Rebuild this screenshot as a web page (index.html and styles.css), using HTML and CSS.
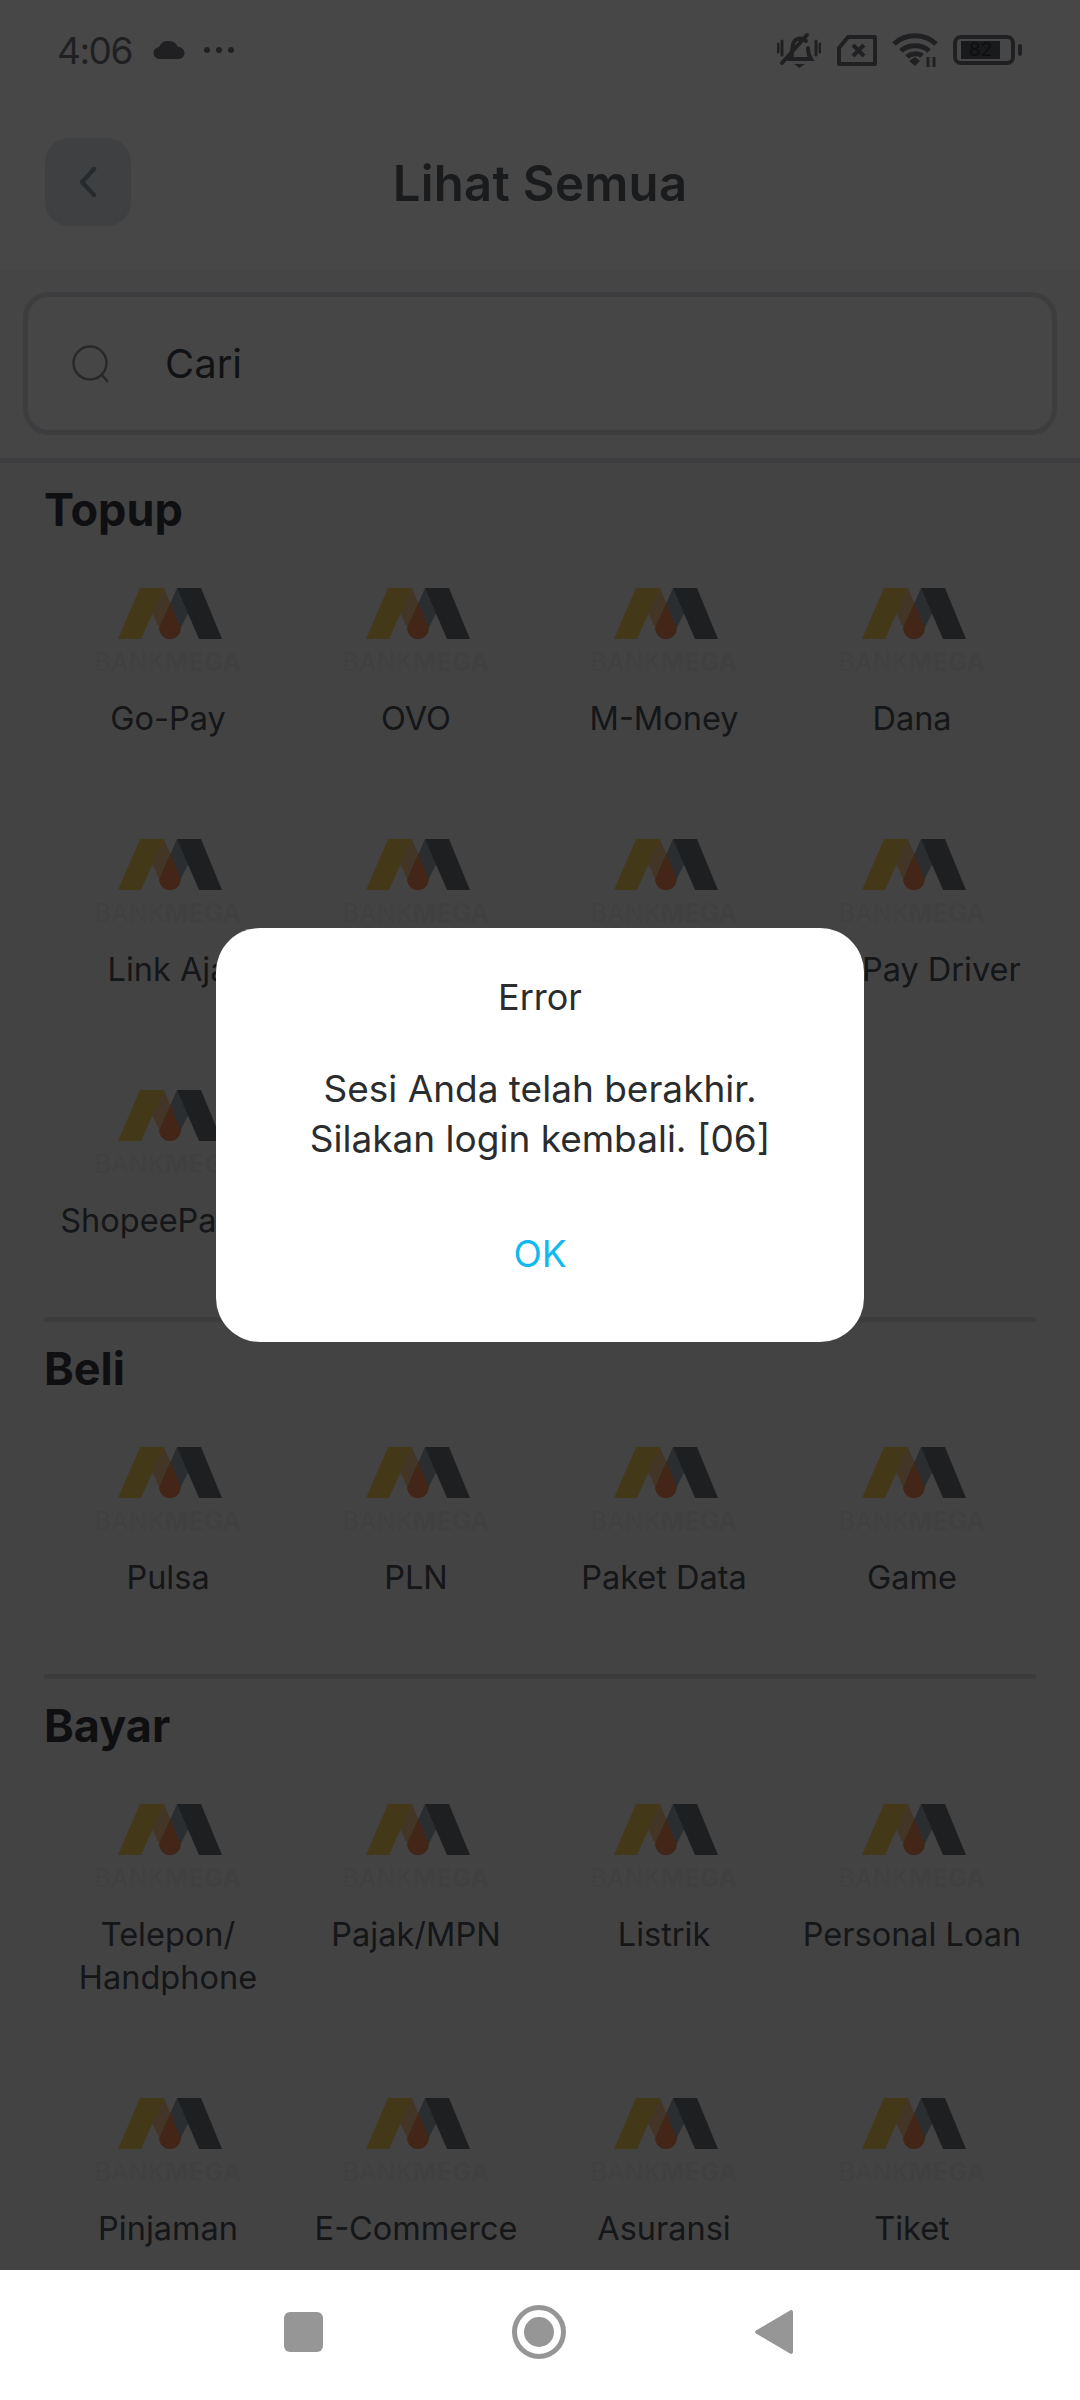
FILE: index.html
```html
<!DOCTYPE html>
<html lang="en">
<head>
    <meta charset="UTF-8">
    <title>Lihat Semua</title>
    <link rel="stylesheet" href="styles.css">
</head>
<body>
    <svg class="defs" width="0" height="0">
        <symbol id="mega" viewBox="0 0 104 51">
            <path fill="#f2c28a" d="M22 0H46L62.7 40A10.7 11 0 0 1 41.3 40Z"/>
            <path fill="#98a6ad" d="M59 0H83L62.7 40A10.7 11 0 0 1 41.3 40Z"/>
            <path fill="#f08a58" d="M52.3 15.1L62.7 40A10.7 11 0 0 1 41.3 40Z"/>
            <path fill="#f0ca52" d="M22 0H46L23 51H0Z"/>
            <path fill="#6e7178" d="M59 0H83L104 51H81Z"/>
        </symbol>
    </svg>

    <div class="screen">
        <div class="app">
            <header class="top">
                <div class="status">
                    <span class="time">4:06</span>
                    <svg class="cloud" viewBox="0 0 32 18"><path d="M7 18a6 6 0 0 1-1-12A10 10 0 0 1 16 0a10 10 0 0 1 9 6 6 6 0 0 1 1 12Z"/></svg>
                    <span class="dots"><i></i><i></i><i></i></span>
                    <div class="status-right">
                        <svg class="st-bell" viewBox="0 0 44 37" fill="none">
                            <path d="M14 27C16 22 14 15 17 10C19 6 26 5 29 9M31 16C31 20 32 24 34 27H11M30 3L5 31" stroke-width="4" stroke-linecap="round"/>
                            <path d="M1 12V20M5 9V23M39 9V23M43 12V20" stroke-width="3" stroke-linecap="round"/>
                            <path class="solid" d="M17 32H28L22.500 36Z"/>
                        </svg>
                        <svg class="st-sim" viewBox="0 0 40 31" fill="none">
                            <path d="M2 13L11 2H38V29H2Z" stroke-width="4" stroke-linejoin="round"/>
                            <path d="M16 10L27 21M27 10L16 21" stroke-width="4"/>
                        </svg>
                        <svg class="st-wifi" viewBox="0 0 46 34" fill="none">
                            <path d="M2 11C13 0 33 0 44 11M9 18C16 11 30 11 37 18M15 24C19 20 27 20 30 23" stroke-width="5"/>
                            <path class="solid" d="M17 28L23 24L28 28L23 33Z"/>
                            <path d="M36 24V34M42 24V34" stroke-width="3"/>
                        </svg>
                        <div class="battery">
                            <div class="battery-body">
                                <div class="battery-fill"></div>
                                <span class="battery-num">82</span>
                            </div>
                            <div class="battery-nub"></div>
                        </div>
                    </div>
                </div>
                <div class="appbar">
                    <div class="back">
                        <svg viewBox="0 0 18 30" width="18" height="30" fill="none"><path d="M15 2L3 15L15 28" stroke-width="4.500" stroke-linecap="round" stroke-linejoin="round"/></svg>
                    </div>
                    <h1>Lihat Semua</h1>
                </div>
            </header>

            <div class="search-wrap">
                <div class="search">
                    <svg viewBox="0 0 38 38" width="38" height="38" fill="none"><circle cx="18" cy="18" r="16.500" stroke-width="2.500"/><path d="M30 30L36 37" stroke-width="2.500"/></svg>
                    <span>Cari</span>
                </div>
            </div>

            <section class="group">
                <h2>Topup</h2>
                <div class="grid">
                    <div class="item"><div class="logo"><svg><use href="#mega"/></svg><p><b>BANK</b><strong>MEGA</strong></p></div><span>Go-Pay</span></div>
                    <div class="item"><div class="logo"><svg><use href="#mega"/></svg><p><b>BANK</b><strong>MEGA</strong></p></div><span>OVO</span></div>
                    <div class="item"><div class="logo"><svg><use href="#mega"/></svg><p><b>BANK</b><strong>MEGA</strong></p></div><span>M-Money</span></div>
                    <div class="item"><div class="logo"><svg><use href="#mega"/></svg><p><b>BANK</b><strong>MEGA</strong></p></div><span>Dana</span></div>
                    <div class="item"><div class="logo"><svg><use href="#mega"/></svg><p><b>BANK</b><strong>MEGA</strong></p></div><span>Link Aja</span></div>
                    <div class="item"><div class="logo"><svg><use href="#mega"/></svg><p><b>BANK</b><strong>MEGA</strong></p></div><span></span></div>
                    <div class="item"><div class="logo"><svg><use href="#mega"/></svg><p><b>BANK</b><strong>MEGA</strong></p></div><span></span></div>
                    <div class="item"><div class="logo"><svg><use href="#mega"/></svg><p><b>BANK</b><strong>MEGA</strong></p></div><span>Go-Pay Driver</span></div>
                    <div class="item"><div class="logo"><svg><use href="#mega"/></svg><p><b>BANK</b><strong>MEGA</strong></p></div><span>ShopeePay ID</span></div>
                </div>
            </section>

            <section class="group">
                <h2>Beli</h2>
                <div class="grid">
                    <div class="item"><div class="logo"><svg><use href="#mega"/></svg><p><b>BANK</b><strong>MEGA</strong></p></div><span>Pulsa</span></div>
                    <div class="item"><div class="logo"><svg><use href="#mega"/></svg><p><b>BANK</b><strong>MEGA</strong></p></div><span>PLN</span></div>
                    <div class="item"><div class="logo"><svg><use href="#mega"/></svg><p><b>BANK</b><strong>MEGA</strong></p></div><span>Paket Data</span></div>
                    <div class="item"><div class="logo"><svg><use href="#mega"/></svg><p><b>BANK</b><strong>MEGA</strong></p></div><span>Game</span></div>
                </div>
            </section>

            <section class="group">
                <h2>Bayar</h2>
                <div class="grid">
                    <div class="item"><div class="logo"><svg><use href="#mega"/></svg><p><b>BANK</b><strong>MEGA</strong></p></div><span>Telepon/<br>Handphone</span></div>
                    <div class="item"><div class="logo"><svg><use href="#mega"/></svg><p><b>BANK</b><strong>MEGA</strong></p></div><span>Pajak/MPN</span></div>
                    <div class="item"><div class="logo"><svg><use href="#mega"/></svg><p><b>BANK</b><strong>MEGA</strong></p></div><span>Listrik</span></div>
                    <div class="item"><div class="logo"><svg><use href="#mega"/></svg><p><b>BANK</b><strong>MEGA</strong></p></div><span>Personal Loan</span></div>
                    <div class="item"><div class="logo"><svg><use href="#mega"/></svg><p><b>BANK</b><strong>MEGA</strong></p></div><span>Pinjaman</span></div>
                    <div class="item"><div class="logo"><svg><use href="#mega"/></svg><p><b>BANK</b><strong>MEGA</strong></p></div><span>E-Commerce</span></div>
                    <div class="item"><div class="logo"><svg><use href="#mega"/></svg><p><b>BANK</b><strong>MEGA</strong></p></div><span>Asuransi</span></div>
                    <div class="item"><div class="logo"><svg><use href="#mega"/></svg><p><b>BANK</b><strong>MEGA</strong></p></div><span>Tiket</span></div>
                </div>
            </section>

            <div class="scrim">
                <div class="dialog">
                    <div class="dialog-title">Error</div>
                    <div class="dialog-msg">Sesi Anda telah berakhir.<br>Silakan login kembali. [06]</div>
                    <div class="dialog-ok">OK</div>
                </div>
            </div>
        </div>

        <nav class="navbar">
            <div class="nav-square"></div>
            <div class="nav-home"><div></div></div>
            <svg class="nav-back" viewBox="0 0 38 46"><path d="M35 1.500C36.500 0.500 38 1.500 38 3V43C38 44.500 36.500 45.500 35 44.500L1 24.500C-0.300 23.500 -0.300 22.500 1 21.500Z"/></svg>
        </nav>
    </div>
</body>
</html>
```

FILE: styles.css
```css
* {
    box-sizing: border-box;
}
html,
body {
    margin: 0;
    padding: 0;
    background: #fff;
}
body {
    font-family: Inter, "Noto Sans", sans-serif;
    color: #4c4f58;
}
.defs {
    position: absolute;
}
.screen {
    width: 1080px;
    height: 2400px;
    display: flex;
    flex-direction: column;
    overflow: hidden;
}

/* everything behind the dialog, dimmed by .scrim */
.app {
    position: relative;
    height: 2270px;
    overflow: hidden;
    background: #f0f0f3;
}
.scrim {
    position: absolute;
    inset: 0;
    display: flex;
    align-items: center;
    justify-content: center;
    background: rgba(0, 0, 0, .72);
}

/* top */
.top {
    height: 270px;
    background: #fff;
}
.status {
    height: 92px;
    padding: 8px 58px 0 57px;
    display: flex;
    align-items: center;
    color: #72747a;
}
.time {
    font-size: 37px;
    letter-spacing: -1.500px;
    margin-right: 21px;
}
.cloud {
    width: 32px;
    height: 18px;
    fill: #72747a;
    margin-right: 19px;
}
.dots {
    display: flex;
    gap: 6px;
}
.dots i {
    width: 6px;
    height: 6px;
    border-radius: 50%;
    background: #72747a;
}
.status-right {
    margin-left: auto;
    display: flex;
    align-items: center;
}
.status-right svg {
    stroke: #72747a;
}
.status-right .solid {
    fill: #72747a;
    stroke: none;
}
.st-bell {
    width: 44px;
    height: 37px;
    margin-right: 16px;
}
.st-sim {
    width: 40px;
    height: 31px;
    margin-right: 15px;
}
.st-wifi {
    width: 46px;
    height: 34px;
    margin-right: 15px;
}
.battery {
    display: flex;
    align-items: center;
    gap: 3px;
}
.battery-body {
    position: relative;
    width: 62px;
    height: 30px;
    border: 4px solid #72747a;
    border-radius: 8px;
}
.battery-fill {
    position: absolute;
    left: 4px;
    top: 2px;
    bottom: 2px;
    width: 39px;
    background: #5c5e63;
}
.battery-num {
    position: absolute;
    left: 4px;
    width: 39px;
    top: 0;
    line-height: 22px;
    text-align: center;
    font-size: 19px;
    color: #33353a;
}
.battery-nub {
    width: 4px;
    height: 12px;
    border-radius: 2px;
    background: #72747a;
}
.appbar {
    position: relative;
    height: 178px;
    display: flex;
    align-items: center;
    justify-content: center;
}
.back {
    position: absolute;
    left: 45px;
    top: 46px;
    width: 86px;
    height: 88px;
    border-radius: 24px;
    background: #dfe6eb;
    display: flex;
    align-items: center;
    justify-content: center;
}
.back svg {
    stroke: #8f9ca3;
}
h1 {
    margin: 0;
    font-size: 49px;
    letter-spacing: .3px;
    font-weight: 600;
    color: #5e6168;
    position: relative;
    top: 2px;
}

/* search */
.search-wrap {
    height: 193px;
    padding: 22px 23px 0;
    background: #f6f6f8;
    border-bottom: 5px solid #dcdce0;
}
.search {
    height: 143px;
    padding-left: 44px;
    border: 5px solid #dcdce0;
    border-radius: 26px;
    background: #fbfbfd;
    display: flex;
    align-items: center;
    gap: 55px;
    font-size: 40px;
    color: #3f4148;
}
.search svg {
    stroke: #8f9196;
}

/* sections */
.group {
    margin: 0 44px;
    padding: 17px 0 75px;
    border-bottom: 5px solid #d6d6da;
}
.group h2 {
    margin: 0 0 48px;
    font-size: 45px;
    line-height: 60px;
    font-weight: 700;
    color: #363840;
}
.grid {
    display: grid;
    grid-template-columns: repeat(4, 248px);
    row-gap: 99px;
}
.item {
    display: flex;
    flex-direction: column;
    align-items: center;
    text-align: center;
    font-size: 32.500px;
    line-height: 43px;
    color: #4c4f58;
}
.item > span {
    min-height: 43px;
    white-space: nowrap;
}
.logo {
    height: 109px;
    display: flex;
    flex-direction: column;
    align-items: center;
}
.logo svg {
    width: 104px;
    height: 51px;
    margin-left: 3px;
}
.logo p {
    margin: 11px 0 0;
    font-size: 25px;
    line-height: 24px;
    letter-spacing: .3px;
    color: #e7e7ea;
}
.logo b {
    font-weight: 400;
}
.logo strong {
    font-weight: 700;
}

/* dialog */
.dialog {
    width: 648px;
    height: 414px;
    padding-top: 44px;
    border-radius: 44px;
    background: #fff;
    text-align: center;
    font-size: 37px;
    color: #2b2c2e;
}
.dialog-title {
    line-height: 50px;
    font-size: 36px;
}
.dialog-msg {
    margin-top: 42px;
    line-height: 50px;
}
.dialog-ok {
    margin-top: 65px;
    line-height: 50px;
    color: #10b9ef;
}

/* android nav */
.navbar {
    height: 130px;
    background: #fff;
    position: relative;
}
.nav-square {
    position: absolute;
    left: 284px;
    top: 42px;
    width: 39px;
    height: 40px;
    border-radius: 6px;
    background: #969696;
}
.nav-home {
    position: absolute;
    left: 512px;
    top: 35px;
    width: 54px;
    height: 54px;
    border: 5px solid #969696;
    border-radius: 50%;
    display: flex;
    align-items: center;
    justify-content: center;
}
.nav-home div {
    width: 30px;
    height: 30px;
    border-radius: 50%;
    background: #969696;
}
.nav-back {
    position: absolute;
    left: 755px;
    top: 39px;
    width: 38px;
    height: 46px;
    fill: #969696;
}
```
